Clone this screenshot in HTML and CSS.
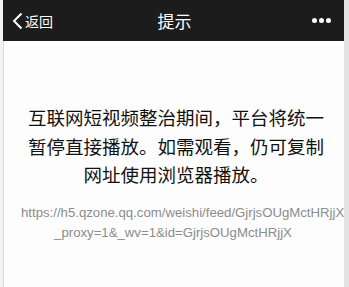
FILE: index.html
```html
<!DOCTYPE html>
<html>
<head>
<meta charset="utf-8">
<link rel="stylesheet" href="styles.css">
</head>
<body>
<div class="frame">
  <div class="main">
    <header class="bar">
      <div class="back">
        <svg class="chev" width="11" height="18" viewBox="0 0 11 18"><path d="M9.5 1.5 L2 9 L9.5 16.5" fill="none" stroke="#fff" stroke-width="2"/></svg>
        <span>返回</span>
      </div>
      <div class="title">提示</div>
      <div class="more"><i></i><i></i><i></i></div>
    </header>
    <section class="content">
      <p class="msg">互联网短视频整治期间，平台将统一暂停直接播放。如需观看，仍可复制网址使用浏览器播放。</p>
      <div class="url">
        <div class="l1">https://h5.qzone.qq.com/weishi/feed/GjrjsOUgMctHRjjX</div>
        <div class="l2">_proxy=1&amp;_wv=1&amp;id=GjrjsOUgMctHRjjX</div>
      </div>
    </section>
  </div>
  <div class="edge"></div>
</div>
</body>
</html>
```
FILE: styles.css
```css
html, body { margin: 0; padding: 0; }
body {
  width: 349px; height: 287px; overflow: hidden;
  background: #f2f2f2;
  font-family: "Noto Sans CJK SC", "Liberation Sans", sans-serif;
}
.frame { display: flex; height: 287px; }
.main {
  width: 341px; margin-left: 3px;
  background: #fdfdfd;
  border-left: 1px solid #d8d8d8;
  box-sizing: border-box;
  display: flex; flex-direction: column;
}
.edge { width: 5px; background: #e3e3e3; }
.bar {
  height: 41px; background: #1c1c1c; color: #fff;
  display: flex; align-items: center; position: relative;
  margin-left: -1px;
}
.back { display: flex; align-items: center; padding-left: 9px; font-size: 14px; gap: 2px; }
.chev { display: block; }
.title {
  position: absolute; left: 0; right: 0; text-align: center;
  font-size: 17px; margin-left: 2px; pointer-events: none;
}
.more { margin-left: auto; display: flex; gap: 2px; padding-right: 13px; }
.more i { width: 5px; height: 5px; border-radius: 50%; background: #fff; display: block; }
.content { flex: 1; padding-top: 62px; }
.msg {
  margin: 0; padding: 0 17px 0 21px;
  font-size: 18.5px; line-height: 28.5px; color: #111; text-align: center;
}
.url {
  margin-top: 14px; font-family: "Liberation Sans", sans-serif;
  font-size: 13.2px; line-height: 20px; color: #8c8c8c;
}
.l1 { white-space: nowrap; padding-left: 17px; }
.l2 { text-align: center; padding-right: 2px; }
```
